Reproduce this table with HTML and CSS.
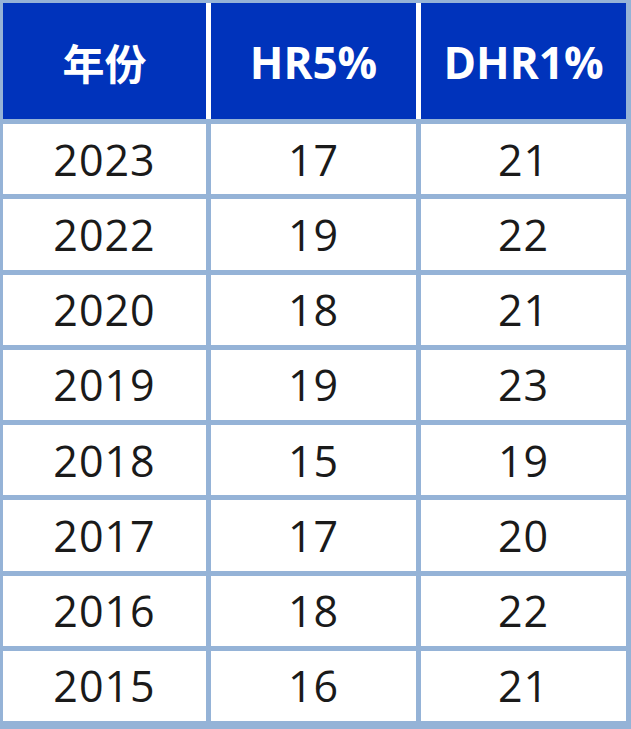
FILE: index.html
```html
<!DOCTYPE html>
<html lang="zh">
<head>
<meta charset="utf-8">
<link rel="stylesheet" href="styles.css">
</head>
<body>
<div class="sheet">
  <div class="head">
    <div class="hcell cjk">年份</div>
    <div class="hcell">HR5%</div>
    <div class="hcell">DHR1%</div>
  </div>
  <div class="body">
    <div class="cell">2023</div><div class="cell">17</div><div class="cell">21</div>
    <div class="cell">2022</div><div class="cell">19</div><div class="cell">22</div>
    <div class="cell">2020</div><div class="cell">18</div><div class="cell">21</div>
    <div class="cell">2019</div><div class="cell">19</div><div class="cell">23</div>
    <div class="cell">2018</div><div class="cell">15</div><div class="cell">19</div>
    <div class="cell">2017</div><div class="cell">17</div><div class="cell">20</div>
    <div class="cell">2016</div><div class="cell">18</div><div class="cell">22</div>
    <div class="cell">2015</div><div class="cell">16</div><div class="cell">21</div>
  </div>
</div>
</body>
</html>
```
FILE: styles.css
```css
html, body {
  margin: 0;
  padding: 0;
  background: #ffffff;
}
.sheet {
  width: 631px;
  height: 729px;
  box-sizing: border-box;
  background: #95b3d7;
  padding: 3px 5px 8px 3px;
  display: flex;
  flex-direction: column;
  gap: 5px;
  font-family: "Open Sans", "Noto Sans", "Noto Sans CJK SC", sans-serif;
}
.head {
  height: 116px;
  display: grid;
  grid-template-columns: 203px 205px 205px;
  column-gap: 5px;
  background: #ffffff;
}
.hcell {
  background: #0033bb;
  color: #ffffff;
  font-weight: 700;
  font-size: 44px;
  display: flex;
  align-items: center;
  justify-content: center;
  padding-top: 1px;
}
.cjk {
  font-family: "Noto Sans CJK SC", sans-serif;
  font-size: 42px;
}
.body {
  flex: 1;
  display: grid;
  grid-template-columns: 203px 205px 205px;
  grid-template-rows: repeat(8, 1fr);
  column-gap: 5px;
  row-gap: 5px;
}
.cell {
  background: #ffffff;
  color: #1a1a1a;
  font-size: 43px;
  letter-spacing: 1px;
  display: flex;
  align-items: center;
  justify-content: center;
}
```
